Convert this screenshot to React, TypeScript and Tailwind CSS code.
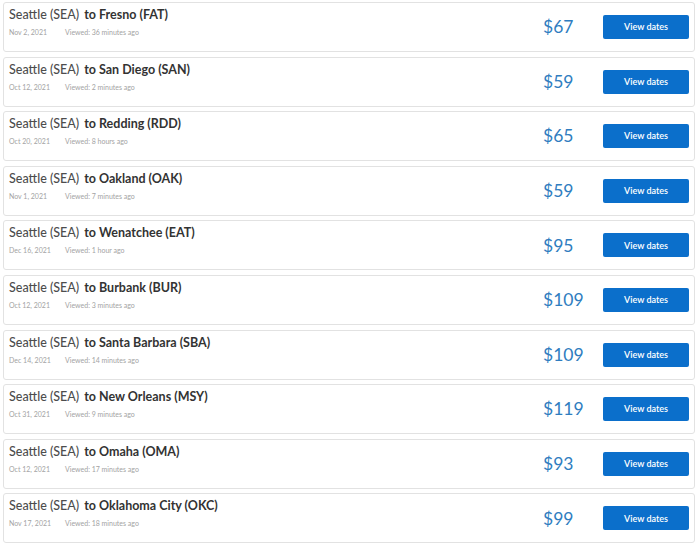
const trips = [
  { city: 'Fresno (FAT)', date: 'Nov 2, 2021', viewed: '36 minutes ago', price: 67 },
  { city: 'San Diego (SAN)', date: 'Oct 12, 2021', viewed: '2 minutes ago', price: 59 },
  { city: 'Redding (RDD)', date: 'Oct 20, 2021', viewed: '8 hours ago', price: 65 },
  { city: 'Oakland (OAK)', date: 'Nov 1, 2021', viewed: '7 minutes ago', price: 59 },
  { city: 'Wenatchee (EAT)', date: 'Dec 16, 2021', viewed: '1 hour ago', price: 95 },
  { city: 'Burbank (BUR)', date: 'Oct 12, 2021', viewed: '3 minutes ago', price: 109 },
  { city: 'Santa Barbara (SBA)', date: 'Dec 14, 2021', viewed: '14 minutes ago', price: 109 },
  { city: 'New Orleans (MSY)', date: 'Oct 31, 2021', viewed: '9 minutes ago', price: 119 },
  { city: 'Omaha (OMA)', date: 'Oct 12, 2021', viewed: '17 minutes ago', price: 93 },
  { city: 'Oklahoma City (OKC)', date: 'Nov 17, 2021', viewed: '18 minutes ago', price: 99 },
]

function TripRow({ city, date, viewed, price }: (typeof trips)[number]) {
  return (
    <div className="flex h-[50px] items-center rounded-[3px] border border-[#e2e2e2] bg-white pl-[5px] pr-[5px]">
      <div className="flex flex-1 flex-col self-start pt-[4px]">
        <div className="flex text-[12.5px] leading-[16px] text-[#4d4d4d]">
          <span className="font-medium">Seattle (SEA)</span>
          <span className="ml-[5px] font-bold text-[#333]">to {city}</span>
        </div>
        <div className="mt-[5px] flex text-[7px] leading-[9px] text-[#a3a3a3]">
          <span className="w-[56px]">{date}</span>
          <span>Viewed: {viewed}</span>
        </div>
      </div>
      <div className="w-[60px] text-[17.5px] leading-none text-[#2f7dc0]">${price}</div>
      <button className="h-[24px] w-[86px] rounded-[2px] bg-[#0b6fcb] text-[9px] font-semibold text-white">
        View dates
      </button>
    </div>
  )
}

export default function App() {
  return (
    <div className="min-h-screen bg-white px-[3px] pt-[2px] font-['Lato',sans-serif]">
      <div className="flex w-[692px] flex-col gap-[4.6px]">
        {trips.map((t) => (
          <TripRow key={t.city} {...t} />
        ))}
      </div>
    </div>
  )
}
